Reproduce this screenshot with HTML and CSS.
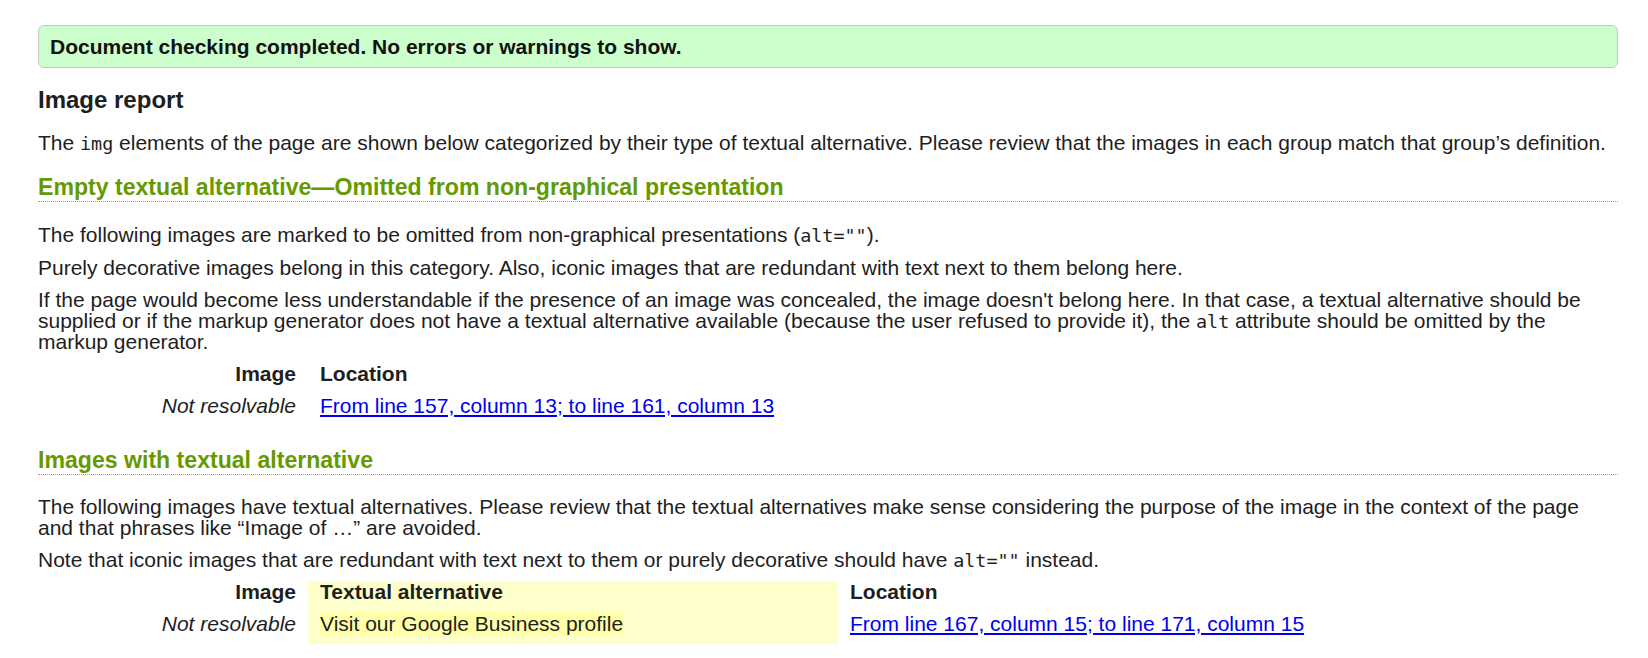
FILE: index.html
```html
<!DOCTYPE html>
<html lang="en">
<head>
<meta charset="utf-8">
<title>Image report</title>
<link rel="stylesheet" href="styles.css">
</head>
<body>
<p class="success">Document checking completed. No errors or warnings to show.</p>
<h2 class="report-title">Image report</h2>
<p>The <code>img</code> elements of the page are shown below categorized by their type of textual alternative. Please review that the images in each group match that group’s definition.</p>

<section class="group">
  <h3 class="group-title">Empty textual alternative—Omitted from non-graphical presentation</h3>
  <p>The following images are marked to be omitted from non-graphical presentations (<code>alt=""</code>).</p>
  <p>Purely decorative images belong in this category. Also, iconic images that are redundant with text next to them belong here.</p>
  <p>If the page would become less understandable if the presence of an image was concealed, the image doesn't belong here. In that case, a textual alternative should be supplied or if the markup generator does not have a textual alternative available (because the user refused to provide it), the <code>alt</code> attribute should be omitted by the markup generator.</p>
  <table class="imagereview">
    <thead>
      <tr><th class="img">Image</th><th class="loc">Location</th></tr>
    </thead>
    <tbody>
      <tr><td class="img">Not resolvable</td><td class="loc"><a href="#">From line 157, column 13; to line 161, column 13</a></td></tr>
    </tbody>
  </table>
</section>

<section class="group group-next">
  <h3 class="group-title">Images with textual alternative</h3>
  <p>The following images have textual alternatives. Please review that the textual alternatives make sense considering the purpose of the image in the context of the page and that phrases like “Image of …” are avoided.</p>
  <p>Note that iconic images that are redundant with text next to them or purely decorative should have <code>alt=""</code> instead.</p>
  <table class="imagereview">
    <thead>
      <tr><th class="img">Image</th><th class="alt">Textual alternative</th><th class="loc">Location</th></tr>
    </thead>
    <tbody>
      <tr><td class="img">Not resolvable</td><td class="alt"><span>Visit our Google Business profile</span></td><td class="loc"><a href="#">From line 167, column 15; to line 171, column 15</a></td></tr>
    </tbody>
  </table>
</section>
</body>
</html>
```

FILE: styles.css
```css
html, body {
  background: #ffffff;
}

body {
  margin: 0;
  padding: 25px 30px 0 38px;
  font-family: "Liberation Sans", Arial, sans-serif;
  font-size: 21px;
  line-height: 21px;
  color: #1e1e1e;
}

p {
  margin: 11px 0;
}

code {
  font-family: "DejaVu Sans Mono", monospace;
  font-size: 18.4px;
  line-height: 1;
}

.success {
  margin: 0;
  padding: 10px 11px;
  background: #ccffcc;
  border: 1px solid #c8c8c8;
  border-radius: 6px;
  font-weight: bold;
  color: #111111;
}

.report-title {
  margin: 19px 0 20px;
  font-size: 24px;
  line-height: 25px;
  font-weight: bold;
}

.group-title {
  margin: 22px 0 22px;
  padding-bottom: 1px;
  font-size: 23.1px;
  line-height: 25px;
  font-weight: bold;
  color: #669900;
  border-bottom: 1px dotted #a3a37a;
}

.group-next .group-title {
  margin-top: 22px;
  margin-bottom: 21px;
}

.imagereview {
  border-collapse: collapse;
  margin: 11px 0 0;
}

.imagereview th,
.imagereview td {
  padding: 0 12px 10.3px;
  text-align: left;
  vertical-align: top;
}

.imagereview th {
  font-weight: bold;
}

.imagereview .img {
  width: 258px;
  padding-left: 0;
  padding-right: 12px;
  text-align: right;
}

.imagereview td.img {
  font-style: italic;
}

.imagereview .alt {
  width: 506px;
  background: #ffffcc;
}

.imagereview .alt span {
  background: #ffffaa;
}

.imagereview a {
  color: #0000ee;
  text-decoration: underline;
}
```
